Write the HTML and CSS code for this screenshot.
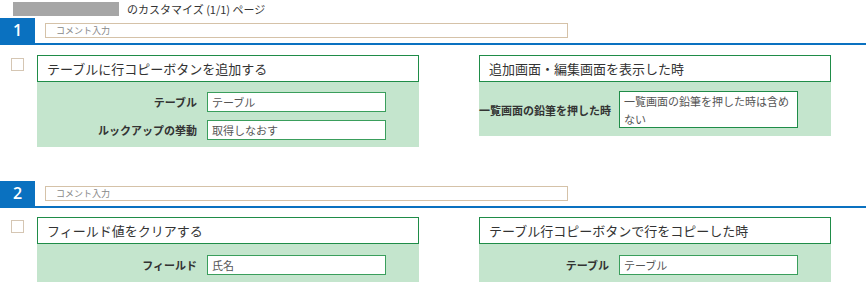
FILE: index.html
```html
<!DOCTYPE html>
<html lang="ja">
<head>
<meta charset="UTF-8" />
<title>カスタマイズ</title>
<link rel="stylesheet" href="styles.css">
</head>
<body>

<div class="page-title">
  <span class="app-name"></span>
  <span>のカスタマイズ (1/1) ページ</span>
</div>

<div class="section">
  <div class="section-head">
    <div class="num">1</div>
    <div class="comment">コメント入力</div>
  </div>
  <div class="row">
    <div class="check"></div>
    <div class="action">
      <div class="action-title">テーブルに行コピーボタンを追加する</div>
      <div class="panel">
        <div class="field">
          <div class="label">テーブル</div>
          <div class="input">テーブル</div>
        </div>
        <div class="field">
          <div class="label">ルックアップの挙動</div>
          <div class="input">取得しなおす</div>
        </div>
      </div>
    </div>
    <div class="action trigger">
      <div class="action-title">追加画面・編集画面を表示した時</div>
      <div class="panel">
        <div class="field">
          <div class="label">一覧画面の鉛筆を押した時</div>
          <div class="input multi">一覧画面の鉛筆を押した時は含めない</div>
        </div>
      </div>
    </div>
  </div>
</div>

<div class="section">
  <div class="section-head">
    <div class="num">2</div>
    <div class="comment">コメント入力</div>
  </div>
  <div class="row">
    <div class="check"></div>
    <div class="action">
      <div class="action-title">フィールド値をクリアする</div>
      <div class="panel">
        <div class="field">
          <div class="label">フィールド</div>
          <div class="input">氏名</div>
        </div>
      </div>
    </div>
    <div class="action trigger">
      <div class="action-title">テーブル行コピーボタンで行をコピーした時</div>
      <div class="panel">
        <div class="field">
          <div class="label">テーブル</div>
          <div class="input">テーブル</div>
        </div>
      </div>
    </div>
  </div>
</div>

</body>
</html>
```

FILE: styles.css
```css
body {
  margin: 0;
  font-family: "Noto Sans CJK JP", "Noto Sans", sans-serif;
  color: #333;
  background: white;
}
.page-title {
  display: flex;
  align-items: center;
  height: 18px;
  padding-left: 13px;
  font-size: 11px;
  color: #333;
}
.app-name {
  width: 106px;
  height: 14px;
  margin-right: 8px;
  background: #a6a6a6;
}
.section {
  margin-bottom: 34px;
}
.section:last-child {
  margin-bottom: 0;
}
.section-head {
  display: flex;
  height: 25px;
  border-bottom: 2px solid #0a71c0;
}
.num {
  width: 35px;
  background: #0a71c0;
  color: white;
  font-family: "Open Sans", sans-serif;
  font-size: 16px;
  font-weight: 600;
  line-height: 25px;
  text-align: center;
}
.comment {
  box-sizing: border-box;
  width: 523px;
  height: 15px;
  margin: 5px 0 0 10px;
  padding-left: 10px;
  border: 1px solid #d5c2a8;
  font-size: 9px;
  line-height: 13px;
  color: #888;
}
.row {
  display: flex;
  align-items: flex-start;
  padding: 10px 0 0 11px;
}
.section + .section .row {
  padding-top: 9px;
}
.check {
  box-sizing: border-box;
  width: 13px;
  height: 13px;
  margin: 3px 13px 0 0;
  border: 1px solid #d5c6b3;
}
.action {
  width: 382px;
}
.trigger {
  width: 352px;
  margin-left: 60px;
}
.action-title {
  box-sizing: border-box;
  height: 27px;
  padding-left: 9px;
  border: 1px solid #1f8c48;
  font-size: 13px;
  line-height: 25px;
  color: #333;
  background: white;
}
.panel {
  display: flex;
  flex-direction: column;
  gap: 8px;
  padding: 10px 0 7px;
  background: #c4e5cd;
}
.field {
  display: flex;
  align-items: center;
  gap: 10px;
}
.label {
  width: 160px;
  text-align: right;
  font-size: 11px;
  font-weight: 700;
  color: #333;
  white-space: nowrap;
}
.trigger .label {
  width: 130px;
}
.input {
  box-sizing: border-box;
  width: 179px;
  height: 20px;
  padding-left: 4px;
  border: 1px solid #3a9e5c;
  background: white;
  font-size: 11px;
  line-height: 18px;
  color: #555;
}
.input.multi {
  height: 37px;
  padding: 0 4px;
  border-color: #1f8c48;
}
.trigger .panel {
  padding: 9px 0 8px;
}
.section + .section .panel {
  padding: 11px 0 7px;
}
```
